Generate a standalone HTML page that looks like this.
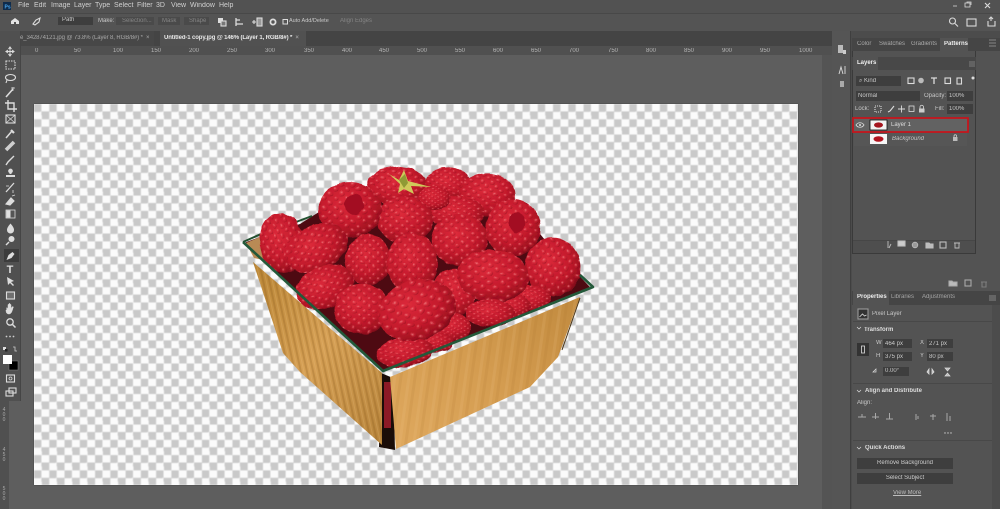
<!DOCTYPE html>
<html><head><meta charset="utf-8"><style>
html,body{margin:0;padding:0;background:#5a5a5a}
#r{position:relative;width:1000px;height:509px;overflow:hidden;background:#5e5e5e;font-family:"Liberation Sans",sans-serif;color:#c8c8c8}
.b{position:absolute}
.t{position:absolute;font-size:6px;line-height:10px;white-space:nowrap;filter:blur(.35px)}
.m{font-size:7px;color:#d0d0d0}
.d{color:#858585}
.f{position:absolute;background:#3e3e3e;height:8px}
.u{position:absolute;top:46px;font-size:6px;line-height:10px;color:#b5b5b5;filter:blur(.35px)}
.v{position:absolute;left:1px;font-size:5px;line-height:5px;width:6px;text-align:center;color:#aaa;filter:blur(.3px)}
svg{position:absolute;left:0;top:0}
</style></head><body><div id="r">
<!-- bars -->
<div class="b" style="left:0;top:0;width:1000px;height:13px;background:#525252"></div>
<div class="b" style="left:0;top:13px;width:1000px;height:18px;background:#545454;border-top:1px solid #484848;box-sizing:border-box"></div>
<div class="b" style="left:0;top:31px;width:832px;height:15px;background:#444"></div>
<div class="b" style="left:0;top:46px;width:832px;height:9px;background:#505050"></div>
<div class="b" style="left:20px;top:31px;width:134px;height:15px;background:#474747"></div>
<div class="b" style="left:160px;top:31px;width:146px;height:15px;background:#515151"></div>
<div class="b" style="left:0;top:31px;width:21px;height:370px;background:#505050;border-right:1px solid #454545;box-sizing:border-box"></div>
<div class="b" style="left:0;top:401px;width:9px;height:108px;background:#505050"></div>
<div class="b" style="left:4px;top:249px;width:15px;height:13px;background:#3c3c3c"></div>
<!-- right dock -->
<div class="b" style="left:822px;top:55px;width:10px;height:454px;background:#545454"></div>
<div class="b" style="left:832px;top:31px;width:168px;height:478px;background:#4c4c4c"></div>
<div class="b" style="left:832px;top:31px;width:19px;height:478px;background:#555;border-right:1px solid #3f3f3f;box-sizing:border-box"></div>
<div class="b" style="left:852px;top:38px;width:148px;height:253px;background:#535353"></div>
<div class="b" style="left:852px;top:38px;width:148px;height:13px;background:#454545"></div>
<div class="b" style="left:940px;top:38px;width:28px;height:13px;background:#535353"></div>
<div class="b" style="left:852px;top:51px;width:124px;height:203px;background:#535353;border:1px solid #3a3a3a;border-top:0;box-sizing:border-box"></div>
<div class="b" style="left:852px;top:57px;width:124px;height:13px;background:#484848"></div>
<div class="b" style="left:853px;top:57px;width:25px;height:13px;background:#535353"></div>
<div class="b" style="left:853px;top:240px;width:122px;height:13px;background:#4e4e4e;border-top:1px solid #464646;box-sizing:border-box"></div>
<div class="b" style="left:852px;top:291px;width:148px;height:218px;background:#535353"></div>
<div class="b" style="left:852px;top:291px;width:148px;height:14px;background:#454545"></div>
<div class="b" style="left:853px;top:291px;width:36px;height:14px;background:#535353"></div>
<div class="b" style="left:992px;top:305px;width:8px;height:204px;background:#4c4c4c"></div>
<div class="b" style="left:853px;top:321px;width:139px;height:1px;background:#484848"></div>
<div class="b" style="left:853px;top:383px;width:139px;height:1px;background:#484848"></div>
<div class="b" style="left:853px;top:440px;width:139px;height:1px;background:#484848"></div>
<!-- canvas -->
<div class="b" style="left:34px;top:104px;width:764px;height:381px;overflow:hidden;box-shadow:0 0 1px #333;background:#fff"><div style="width:100%;height:100%;background:repeating-conic-gradient(#fbfbfb 0 25%,#c9c9c9 0 50%) 0 0/15.280px 15.280px;filter:blur(.5px)"></div></div>
<!-- artwork + icons -->
<svg width="1000" height="509" viewBox="0 0 1000 509">
<defs>
<radialGradient id="g" cx=".42" cy=".36" r=".72"><stop offset="0" stop-color="#dc2a3a"/><stop offset=".55" stop-color="#c41a2c"/><stop offset=".82" stop-color="#a01020"/><stop offset="1" stop-color="#5c0812"/></radialGradient>
<radialGradient id="dr" cx=".38" cy=".32" r=".72"><stop offset="0" stop-color="#f99a98" stop-opacity=".75"/><stop offset=".5" stop-color="#e23040" stop-opacity=".15"/><stop offset="1" stop-color="#6d0714" stop-opacity=".55"/></radialGradient>
<pattern id="p" width="11" height="10" patternUnits="userSpaceOnUse"><circle cx="2.750" cy="2.500" r="2.800" fill="url(#dr)"/><circle cx="8.250" cy="7.500" r="2.800" fill="url(#dr)"/></pattern>
<linearGradient id="w1" x1="0" y1="0" x2="1" y2="1"><stop offset="0" stop-color="#b98535"/><stop offset=".5" stop-color="#d6a055"/><stop offset="1" stop-color="#b8853c"/></linearGradient>
<linearGradient id="w2" x1="0" y1="1" x2="1" y2="0"><stop offset="0" stop-color="#dfa95f"/><stop offset=".5" stop-color="#d49c50"/><stop offset="1" stop-color="#c18a3e"/></linearGradient>
<pattern id="st" width="6" height="20" patternUnits="userSpaceOnUse" patternTransform="rotate(-12)"><rect x="0" width="2" height="20" fill="#7a4c14" opacity=".22"/><rect x="3.500" width="1" height="20" fill="#f4cd92" opacity=".18"/></pattern>
<pattern id="st2" width="14" height="30" patternUnits="userSpaceOnUse" patternTransform="rotate(8)"><rect x="0" width="3" height="30" fill="#a8722e" opacity=".14"/><rect x="8" width="3" height="30" fill="#f2cb8f" opacity=".14"/></pattern>
<filter id="bump" x="-5%" y="-5%" width="110%" height="110%"><feTurbulence type="fractalNoise" baseFrequency=".13" numOctaves="1" seed="4" result="n"/><feDisplacementMap in="SourceGraphic" in2="n" scale="4" xChannelSelector="R" yChannelSelector="G"/><feGaussianBlur stdDeviation=".35"/></filter>
<g id="be"><ellipse rx="30" ry="30" fill="url(#g)"/><ellipse rx="30" ry="30" fill="url(#p)"/></g>
<g id="hb"><ellipse rx="30" ry="30" fill="url(#g)"/><ellipse rx="30" ry="30" fill="url(#p)"/><ellipse cx="4" cy="-6" rx="9" ry="11" fill="#a30f22"/></g>
</defs>
<!-- interior -->
<polygon points="244,243 265,235 300,224 330,205 400,178 500,185 545,240 590,287 383,370" fill="#4e0a12"/>
<polygon points="246,243 262,236 272,262 254,258" fill="#b98a55"/>
<polyline points="243,242 261,234" stroke="#21502f" stroke-width="2" fill="none"/>
<polyline points="296,222 312,216" stroke="#21502f" stroke-width="2" fill="none"/>
<!-- berries -->
<g filter="url(#bump)">
<use href="#be" transform="translate(397 186) scale(1 .66)"/>
<use href="#be" transform="translate(448 184) scale(.76 .56)"/>
<use href="#be" transform="translate(487 195) scale(.95 .72) rotate(10)"/>
<use href="#be" transform="translate(457 213) scale(.9 .55)"/>
<use href="#be" transform="translate(434 198) scale(.55 .4)"/>
<use href="#be" transform="translate(405 220) scale(.95 .78)"/>
<use href="#hb" transform="translate(350 210) scale(1.05 .93)"/>
<use href="#be" transform="translate(282 243) rotate(-8) scale(.74 1)"/>
<use href="#be" transform="translate(317 248) rotate(-28) scale(1.08 .76)"/>
<use href="#be" transform="translate(460 240) scale(.94 .86)"/>
<use href="#hb" transform="translate(513 228) scale(.92 .95)"/>
<use href="#be" transform="translate(553 267) rotate(-8) scale(.93 .98)"/>
<use href="#be" transform="translate(368 260) scale(.76 .85)"/>
<use href="#be" transform="translate(530 298) scale(.7 .42)"/>
<use href="#be" transform="translate(510 306) scale(.7 .42)"/>
<use href="#be" transform="translate(325 287) rotate(-22) scale(1 .7)"/>
<use href="#be" transform="translate(453 293) rotate(25) scale(.76 .82)"/>
<use href="#be" transform="translate(412 263) scale(.85 1)"/>
<use href="#be" transform="translate(493 276) rotate(3) scale(1.2 .88)"/>
<use href="#be" transform="translate(490 313) scale(.82 .46)"/>
<use href="#be" transform="translate(453 327) scale(.62 .46)"/>
<use href="#be" transform="translate(432 342) scale(.7 .36)"/>
<use href="#be" transform="translate(405 352) rotate(-8) scale(.95 .5)"/>
<use href="#be" transform="translate(362 309) scale(.93 .84)"/>
<use href="#be" transform="translate(417 310) rotate(-18) scale(1.32 1)"/>
</g>
<!-- leaf -->
<polygon points="389,174 399,180 404,170 408,181 431,187 411,186 414,194 404,189 398,193 400,184" fill="#cfc95a"/>
<polygon points="399,180 405,174 408,183 404,188" fill="#8f9a35"/>
<!-- basket -->
<polygon points="381,373 393,378 395,450 379,447" fill="#1a0d08"/>
<polygon points="384,382 391,382 391,428 384,428" fill="#8c1a26"/>
<polygon points="253,262 382,373 382,445 300,372 283,353" fill="url(#w1)"/>
<polygon points="253,262 382,373 382,445 300,372 283,353" fill="url(#st)"/>
<polygon points="390,377 580,297 558,357 530,387 396,449" fill="url(#w2)"/>
<polygon points="390,377 580,297 558,357 530,387 396,449" fill="url(#st2)"/>
<polyline points="580,298 562,350" stroke="#4b3414" stroke-width="1" fill="none"/>
<polyline points="243,242 383,371 593,287 580,275" stroke="#23593a" stroke-width="2.600" fill="none" stroke-linejoin="round"/>
<!-- red highlight -->
<rect x="853" y="118" width="115" height="14" fill="#626262" stroke="#c4161d" stroke-width="1.800"/>
<rect x="854" y="133" width="113" height="13" fill="#565656"/>
<!-- ps logo -->
<rect x="3" y="2" width="8" height="8" fill="#0f2c4c"/>
<!-- options icons -->
<g fill="none" stroke="#dcdcdc" stroke-width="1.100">
<path d="M11 24v-3l4-3 4 3v3h-3v-2h-2v2z" fill="#e4e4e4" stroke="none"/>
<path d="M33 24l3-4 4-2-1 4-4 3z"/>
<rect x="218" y="18" width="5" height="5" fill="#ddd" stroke="none"/><rect x="221" y="21" width="5" height="5" fill="#777"/>
<path d="M236 18v8M236 20h4M236 24h7" stroke-width="1.300"/>
<path d="M252 22h4M254 20v4"/><rect x="257" y="18" width="5" height="8" fill="#999"/>
<circle cx="273" cy="22" r="2.600" stroke-width="1.800"/>
<rect x="283" y="19.500" width="4.500" height="4.500" stroke-width="1"/>
<!-- tools -->
<path d="M10 47v9M5.500 51.500h9M8.500 49l1.500-2 1.500 2M8.500 54l1.500 2 1.500-2M8 50l-2 1.500 2 1.500M12 50l2 1.500-2 1.500" stroke-width="1"/>
<rect x="6" y="61" width="9" height="8" stroke-dasharray="1.500 1"/>
<ellipse cx="10.500" cy="77.500" rx="5" ry="3"/><path d="M7 80l-1 3"/>
<path d="M6 97l7-8" stroke-width="1.600"/><path d="M13 87v4M11 88h4" stroke-width=".7"/>
<path d="M8 100v9h9M5 103h9v9" stroke-width="1.400"/>
<rect x="6" y="115" width="9" height="8"/><path d="M6 115l9 8M15 115l-9 8" stroke-width=".7"/>
<path d="M6 138l6-7" stroke-width="1.500"/><path d="M11 130l3 3" stroke-width="2.200"/>
<path d="M6 150l8-8" stroke-width="3.600" stroke="#cfcfcf"/>
<path d="M6 165l2-3 6-6" stroke-width="1.400"/>
<path d="M10.500 169v5M6 176h9" stroke-width="2"/><circle cx="10.500" cy="171" r="1.800" fill="#ddd"/>
<path d="M6 192l8-9" stroke-width="1.300"/><path d="M6 186h3M13 190v3" stroke-width=".8"/>
<path d="M6 204l5-6 3 3-4 4z" fill="#ddd"/><path d="M12 196l3-1" stroke-width=".8"/>
<path d="M10.500 223.500c-3 3.500-3.500 5-3.500 6.500a3.500 3.500 0 0 0 7 0c0-1.500-.5-3-3.500-6.500z" fill="#ddd" stroke="none"/>
<circle cx="11.500" cy="239" r="3" fill="#ddd" stroke="none"/><path d="M9 242l-3 3" stroke-width="1.400"/>
<path d="M6.500 260l2-5 4-3 2 2-3 4z" fill="#ddd" stroke="none"/>
<path d="M7 277l1 8 2-2 3 3 1-1-3-3 3-1z" fill="#ddd" stroke="none"/>
<rect x="6.500" y="292" width="8" height="7" fill="#6f6f6f"/>
<path d="M7 310c-1-3 0-3 1-1v-4c0-1 1-1 1 0v3-4c0-1 1-1 1 0v4-3c0-1 1-1 1 0v4l1-2c1-1 2 0 1 1-1 4-2 6-4 6-2 0-3-1-3-4z" fill="#ddd" stroke="#ddd" stroke-width=".5"/>
<circle cx="10" cy="322" r="3.200" stroke-width="1.300"/><path d="M12.500 324.500l3 3" stroke-width="1.500"/>
<rect x="6.500" y="375" width="8" height="7"/><circle cx="10.500" cy="378.500" r="1.500" stroke-width=".8"/>
<rect x="6" y="391" width="7" height="5"/><rect x="9" y="388" width="7" height="5"/>
<!-- right top -->
<circle cx="952.500" cy="21" r="3" stroke-width="1.100"/><path d="M955 23.500l3 3" stroke-width="1.100"/>
<rect x="967" y="19" width="9" height="7"/>
<path d="M991 21v-3M989 19l2-2 2 2M988 21v5h7v-5"/>
<path d="M953 6h4M965 7h5V3h-5zM967 3V2h4v3" stroke-width=".8"/>
<path d="M985 3l5 5M990 3l-5 5" stroke-width="1.100"/>
<!-- layers panel icons -->
<rect x="908" y="78" width="6" height="5.500"/><circle cx="921" cy="80.500" r="2.800" fill="#bbb" stroke="none"/>
<path d="M931 78h6M934 78v6" stroke-width="1.300"/><rect x="945" y="78" width="5.500" height="5.500"/><rect x="957" y="78" width="4.500" height="6"/>
<path d="M890 111l4-5M888 112l2-1" stroke-width="1.100"/><rect x="875" y="106" width="6" height="6" stroke-dasharray="1 1"/>
<path d="M898 109h7M901.500 105.500v7" stroke-width=".9"/><rect x="909" y="106" width="5" height="5.500" stroke-width=".8"/>
<rect x="919" y="108.500" width="5.500" height="4" fill="#ccc" stroke="none"/><path d="M920 108.500v-1.500a1.700 1.700 0 0 1 3.500 0v1.500" stroke-width=".8"/>
<path d="M856 125c2-3 6-3 8 0-2 3-6 3-8 0z" stroke-width=".8"/><circle cx="860" cy="125" r="1" fill="#ddd" stroke="none"/>
<rect x="953" y="137" width="4.500" height="4" stroke="none" fill="#bbb"/><path d="M954 137v-1a1.200 1.200 0 0 1 2.500 0v1" stroke-width=".7"/>
<!-- layer footer -->
<g stroke="#bdbdbd"><path d="M888 241v7M891 244l-2 4" stroke-width=".9"/>
<rect x="898" y="241" width="7" height="5" fill="#ccc"/><circle cx="915" cy="245" r="2.800" fill="#999" stroke-width=".8"/>
<path d="M926 243h3l1 1h3v4h-7z" fill="#bbb"/><rect x="940" y="242" width="6" height="6"/><path d="M955 243v5h4v-5M954 243h6" stroke-width=".9"/></g>
<g stroke="#aaa"><path d="M949 281h3l1 1h4v4h-8z" fill="#bbb"/><rect x="965" y="280" width="6" height="6"/><path d="M982 282v5h4v-5M981 282h6" opacity=".5"/></g>
<!-- dock icons -->
<rect x="838" y="45" width="5" height="8" fill="#bbb" stroke="none"/><rect x="843" y="50" width="3" height="4" fill="#ccc" stroke="none"/>
<path d="M839 74l2-7 2 7M845 66v8" stroke-width=".9"/>
<rect x="840" y="81" width="4" height="6" fill="#aaa" stroke="none"/>
<!-- props -->
<rect x="858" y="309" width="10" height="10" fill="#333" stroke="#9a9a9a"/>
<path d="M859.500 317l3-3 2 2 2-1" stroke-width=".8"/>
<rect x="857" y="343" width="12" height="13" fill="#333" stroke="none"/><rect x="861.500" y="346" width="3" height="7" stroke-width=".8"/>
<path d="M873 372l3-3v3z" stroke-width=".7"/>
<path d="M929 369v5l-2-2zM932 369v5l2-2z" stroke-width=".8" fill="#bbb"/>
<path d="M945 368h5l-2.500 3zM945 376h5l-2.500-3z" stroke-width=".7" fill="#bbb"/>
<g stroke="#a8a8a8" stroke-width="1"><path d="M858 417h8M862 414v3M872 417h7M875.500 413v6M886 419h7M889.500 413v6M916 414v6M918 416v3M930 416h6M933 414v6M947 421v-8M950 421v-5"/></g>
<path d="M857 327l2 2 2-2M857 390l2 2 2-2M857 447l2 2 2-2" stroke-width=".7"/>
<path d="M989 40h7M989 43h7M989 46h7M989 296h7M989 298h7M989 300h7" stroke="#9b9b9b" stroke-width=".8"/>
<path d="M969 62h6M969 64h6M969 66h6" stroke="#8e8e8e" stroke-width=".7"/>
</g>
<circle cx="973" cy="78" r="1.500" fill="#ddd"/>
<!-- tool gradient/fg/bg -->
<rect x="6" y="210" width="9" height="8" fill="#555" stroke="#ddd" stroke-width=".8"/><rect x="6.500" y="210.500" width="4" height="7" fill="#e0e0e0"/>
<rect x="9" y="361" width="9" height="9" fill="#000" stroke="#888" stroke-width=".5"/>
<rect x="3" y="355" width="9" height="9" fill="#fff"/>
<rect x="3" y="347" width="3" height="3" fill="#ddd"/><rect x="5" y="349" width="2.500" height="2.500" fill="#222"/>
<path d="M13 347h2v2M17 351h-2v-2" fill="none" stroke="#ccc" stroke-width=".8"/>
<g fill="#ccc"><circle cx="6.500" cy="336.500" r=".9"/><circle cx="10" cy="336.500" r=".9"/><circle cx="13.500" cy="336.500" r=".9"/><circle cx="945" cy="433" r=".7"/><circle cx="948" cy="433" r=".7"/><circle cx="951" cy="433" r=".7"/></g>
<text x="10" y="273" font-family="Liberation Sans" font-size="11" font-weight="bold" fill="#ddd" text-anchor="middle">T</text>
<text x="4.500" y="8.500" font-family="Liberation Sans" font-size="5" font-weight="bold" fill="#4aa8f0">Ps</text>
<!-- thumbs -->
<rect x="870" y="120" width="17" height="10" fill="#f3f3f3" stroke="#111" stroke-width=".8"/><ellipse cx="878.500" cy="125" rx="4.500" ry="2.600" fill="#a5161f"/>
<rect x="870" y="134" width="17" height="10" fill="#f7f7f7"/><ellipse cx="878.500" cy="139" rx="5" ry="2.800" fill="#b2141f"/>
</svg>
<!-- menu -->
<span class="t m" style="left:18px;top:1px">File</span><span class="t m" style="left:34px;top:1px">Edit</span><span class="t m" style="left:51px;top:1px">Image</span><span class="t m" style="left:74px;top:1px">Layer</span><span class="t m" style="left:95px;top:1px">Type</span><span class="t m" style="left:114px;top:1px">Select</span><span class="t m" style="left:137px;top:1px">Filter</span><span class="t m" style="left:156px;top:1px">3D</span><span class="t m" style="left:171px;top:1px">View</span><span class="t m" style="left:190px;top:1px">Window</span><span class="t m" style="left:219px;top:1px">Help</span>
<!-- options -->
<div class="f" style="left:58px;top:17px;width:35px"></div><span class="t" style="left:62px;top:15px">Path</span>
<span class="t" style="left:98px;top:16px">Make:</span>
<div class="f" style="left:116px;top:17px;width:38px;background:#4a4a4a"></div><span class="t d" style="left:122px;top:16px">Selection...</span>
<div class="f" style="left:158px;top:17px;width:22px;background:#4a4a4a"></div><span class="t d" style="left:162px;top:16px">Mask</span>
<div class="f" style="left:184px;top:17px;width:25px;background:#4a4a4a"></div><span class="t d" style="left:189px;top:16px">Shape</span>
<span class="t" style="left:289px;top:16px;font-size:5.500px">Auto Add/Delete</span>
<span class="t d" style="left:340px;top:16px">Align Edges</span>
<!-- tabs -->
<span class="t" style="left:20px;top:33px;color:#a8a8a8;letter-spacing:-.1px">e_342874121.jpg @ 73.8% (Layer 8, RGB/8#) * &nbsp;×</span>
<span class="t" style="left:164px;top:33px;color:#e8e8e8;font-weight:bold;letter-spacing:-.12px">Untitled-1 copy.jpg @ 146% (Layer 1, RGB/8#) * &nbsp;<span style="color:#999">×</span></span>
<!-- ruler -->
<span class="u" style="left:35px">0</span><span class="u" style="left:74px">50</span><span class="u" style="left:113px">100</span><span class="u" style="left:151px">150</span><span class="u" style="left:189px">200</span><span class="u" style="left:227px">250</span><span class="u" style="left:265px">300</span><span class="u" style="left:304px">350</span><span class="u" style="left:342px">400</span><span class="u" style="left:379px">450</span><span class="u" style="left:417px">500</span><span class="u" style="left:455px">550</span><span class="u" style="left:493px">600</span><span class="u" style="left:531px">650</span><span class="u" style="left:569px">700</span><span class="u" style="left:608px">750</span><span class="u" style="left:646px">800</span><span class="u" style="left:684px">850</span><span class="u" style="left:722px">900</span><span class="u" style="left:760px">950</span><span class="u" style="left:799px">1000</span>
<span class="v" style="top:408px">4<br>0<br>0</span><span class="v" style="top:448px">4<br>5<br>0</span><span class="v" style="top:487px">5<br>0<br>0</span>
<!-- panels -->
<span class="t" style="left:857px;top:39px;color:#aaa">Color</span><span class="t" style="left:879px;top:39px;color:#aaa">Swatches</span><span class="t" style="left:911px;top:39px;color:#aaa">Gradients</span><span class="t" style="left:944px;top:39px;color:#eee;font-weight:bold">Patterns</span>
<span class="t" style="left:857px;top:58px;color:#eee;font-weight:bold">Layers</span>
<div class="f" style="left:856px;top:76px;width:45px;height:10px"></div><span class="t" style="left:859px;top:76px">⌕ Kind</span>
<div class="f" style="left:856px;top:91px;width:64px;height:10px"></div><span class="t" style="left:858px;top:91px">Normal</span>
<span class="t" style="left:924px;top:91px">Opacity:</span><div class="f" style="left:947px;top:91px;width:26px;height:10px"></div><span class="t" style="left:949px;top:91px">100%</span>
<span class="t" style="left:855px;top:104px">Lock:</span><span class="t" style="left:935px;top:104px">Fill:</span><div class="f" style="left:947px;top:104px;width:26px;height:10px"></div><span class="t" style="left:949px;top:104px">100%</span>
<span class="t" style="left:891px;top:120px;color:#ddd">Layer 1</span>
<span class="t" style="left:892px;top:134px;font-style:italic;color:#c4c4c4">Background</span>
<span class="t" style="left:857px;top:292px;color:#eee;font-weight:bold">Properties</span><span class="t" style="left:891px;top:292px;color:#a5a5a5">Libraries</span><span class="t" style="left:922px;top:292px;color:#a5a5a5">Adjustments</span>
<span class="t" style="left:872px;top:309px">Pixel Layer</span>
<span class="t" style="left:864px;top:325px;color:#ddd;font-weight:bold">Transform</span>
<span class="t" style="left:876px;top:338px">W</span><div class="f" style="left:883px;top:339px;width:29px;height:9px"></div><span class="t" style="left:885px;top:339px">464 px</span>
<span class="t" style="left:920px;top:338px">X</span><div class="f" style="left:927px;top:339px;width:26px;height:9px"></div><span class="t" style="left:929px;top:339px">271 px</span>
<span class="t" style="left:876px;top:351px">H</span><div class="f" style="left:883px;top:352px;width:29px;height:9px"></div><span class="t" style="left:885px;top:352px">375 px</span>
<span class="t" style="left:920px;top:351px">Y</span><div class="f" style="left:927px;top:352px;width:26px;height:9px"></div><span class="t" style="left:929px;top:352px">80 px</span>
<div class="f" style="left:883px;top:367px;width:26px;height:9px"></div><span class="t" style="left:885px;top:366px">0.00°</span>
<span class="t" style="left:865px;top:386px;color:#ddd;font-weight:bold">Align and Distribute</span>
<span class="t" style="left:857px;top:398px">Align:</span>
<span class="t" style="left:865px;top:443px;color:#ddd;font-weight:bold">Quick Actions</span>
<div class="f" style="left:857px;top:458px;width:96px;height:11px"></div><span class="t" style="left:857px;top:458px;width:96px;text-align:center;color:#ccc">Remove Background</span>
<div class="f" style="left:857px;top:473px;width:96px;height:11px"></div><span class="t" style="left:857px;top:473px;width:96px;text-align:center;color:#ccc">Select Subject</span>
<span class="t" style="left:893px;top:488px;text-decoration:underline;color:#bdbdbd">View More</span>
</div></body></html>
